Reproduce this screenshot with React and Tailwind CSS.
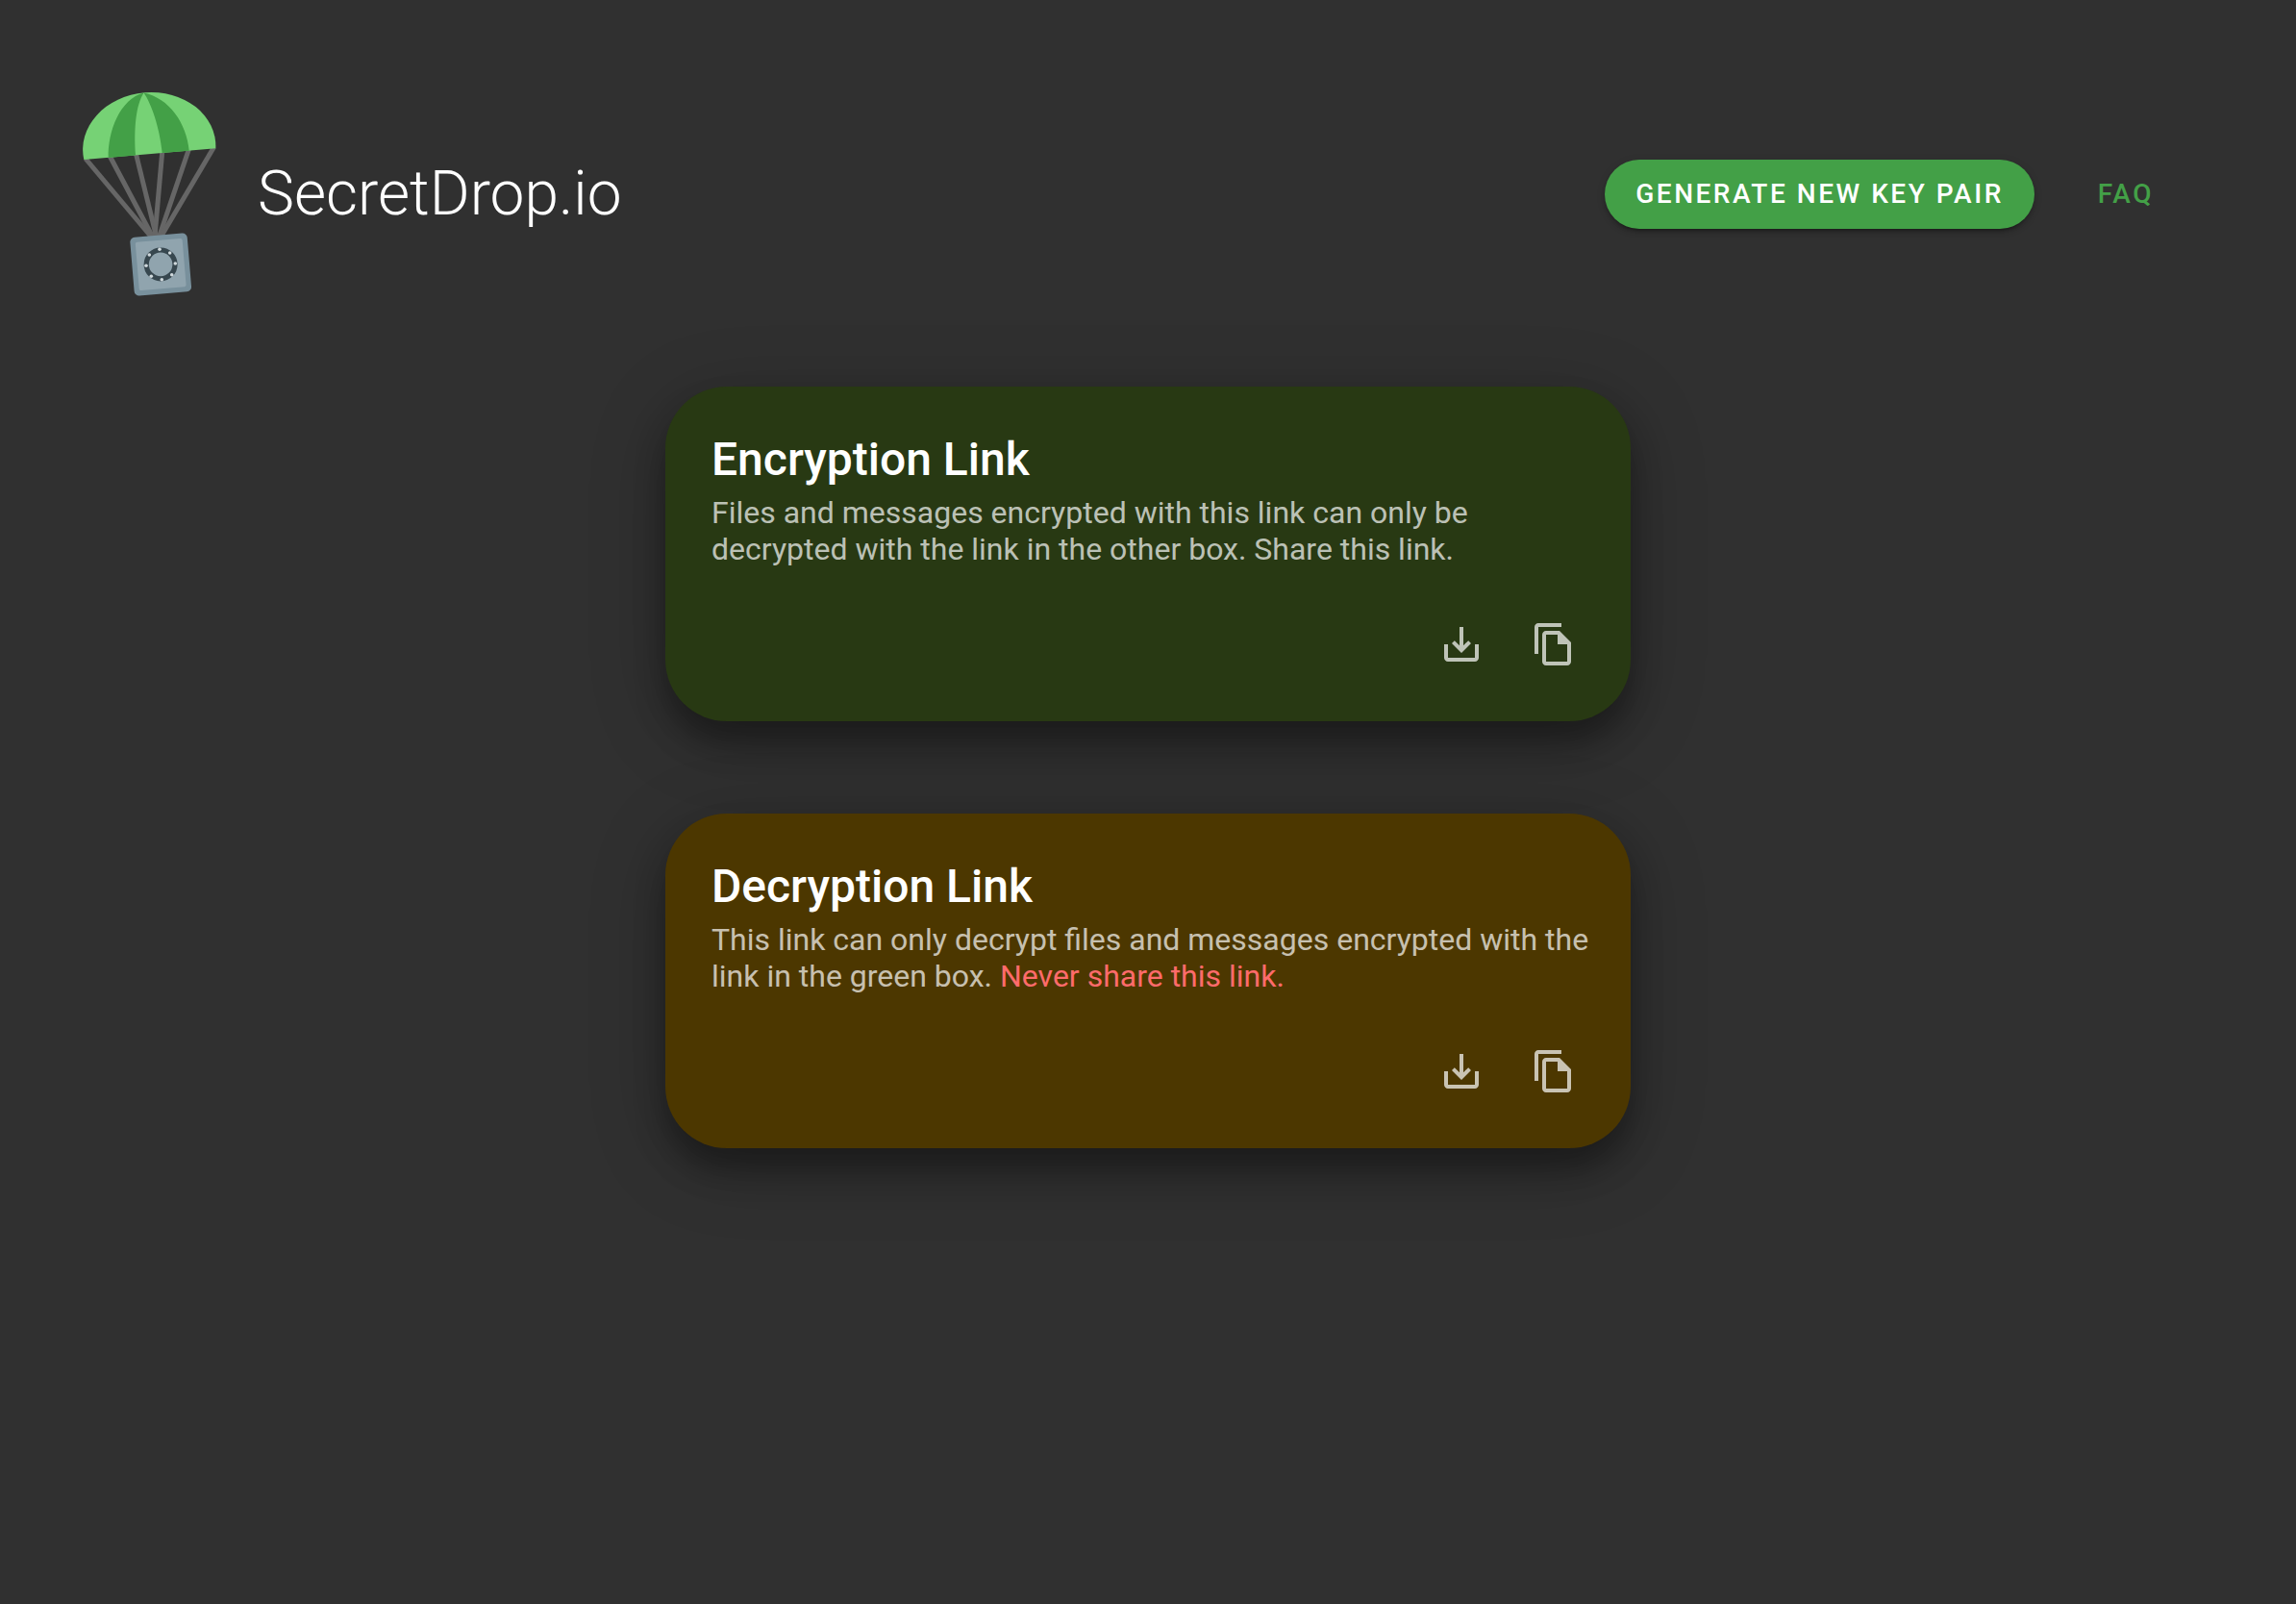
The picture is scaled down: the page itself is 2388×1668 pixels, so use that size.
import React from "react";

const BOLTS = [
  [166, 259.3], [176.7, 263], [182.3, 274], [178.7, 285.7],
  [168.3, 290.7], [157.3, 287.3], [152, 276.3], [155.3, 265],
];

function Logo() {
  return (
    <svg className="h-[216px] w-[144px] shrink-0" viewBox="84 94 144 216" aria-hidden="true">
      <g stroke="#666666" strokeWidth="5" fill="none">
        <path d="M89 165L157 246" />
        <path d="M113.5 161L158.6 246" />
        <path d="M141.2 159L162.6 246" />
        <path d="M168.8 157L161 246" />
        <path d="M196.5 155L165.5 246" />
        <path d="M222.5 153L167.5 246" />
      </g>
      <path d="M87.3 166A69.2 57.5 -4.9 1 1 224.3 154.3Z" fill="#76d275" />
      <path d="M149.5 96.5C125 103 112 136 112.7 163.9L141 161.5C139 133 141.5 109 149.5 96.5Z" fill="#43a047" />
      <path d="M149.5 96.5C157 107 166 132 168.7 159.1L196.7 156.7C194 128 176 102 149.5 96.5Z" fill="#43a047" />
      <g transform="rotate(-4.8 167.2 275)">
        <rect x="137.4" y="244.5" width="59.6" height="61" rx="5" fill="#78909c" />
        <rect x="142.7" y="249.8" width="49" height="50.4" rx="2" fill="#90a4ae" />
      </g>
      <circle cx="167.1" cy="274.9" r="14.9" fill="none" stroke="#37474f" strokeWidth="5.2" />
      {BOLTS.map(([x, y]) => (
        <circle key={`${x}-${y}`} cx={x} cy={y} r="1.8" fill="#cfd8dc" />
      ))}
    </svg>
  );
}

function IconButton({ label, path }) {
  return (
    <button type="button" aria-label={label} className="rounded-full p-6 text-white/70">
      <svg className="size-12" viewBox="0 0 24 24" fill="currentColor" aria-hidden="true">
        <path d={path} />
      </svg>
    </button>
  );
}

const SAVE =
  "M19 12v7H5v-7H3v7c0 1.1.9 2 2 2h14c1.1 0 2-.9 2-2v-7h-2zm-6 .67l2.59-2.58L17 11.5l-5 5-5-5 1.41-1.41L11 12.67V3h2v9.67z";
const COPY =
  "M16 1H4c-1.1 0-2 .9-2 2v14h2V3h12V1zm-1 4H8c-1.1 0-1.99.9-1.99 2L6 21c0 1.1.89 2 1.99 2H19c1.1 0 2-.9 2-2V11l-6-6zm4 16H8V7h6v5h5v9z";

function LinkCard({ title, color, children }) {
  return (
    <section
      className={`${color} rounded-[64px] px-8 pt-12 pb-8 shadow-[0_22px_32px_0_rgba(0,0,0,0.32),0_16px_80px_0_rgba(0,0,0,0.22)]`}
    >
      <div className="pr-2 pl-4">
        <h2 className="text-[48px] leading-[56px] font-medium text-white">{title}</h2>
        <p className="mt-2 text-[32px] leading-[38px] text-white/70">{children}</p>
      </div>
      <div className="mt-8 flex justify-end">
        <IconButton label={`Download ${title}`} path={SAVE} />
        <IconButton label={`Copy ${title}`} path={COPY} />
      </div>
    </section>
  );
}

export default function App() {
  return (
    <div className="min-h-screen bg-[#303030] pb-24 font-['Roboto',sans-serif]">
      <header className="flex items-center justify-between pt-[94px] pr-[116px] pl-[84px]">
        <div className="flex items-center gap-10">
          <Logo />
          <h1 className="text-[64px] leading-[76px] font-light text-white">SecretDrop.io</h1>
        </div>
        <nav className="flex items-center gap-[34px]">
          <button
            type="button"
            className="h-[72px] rounded-full bg-[#43a047] px-8 text-[28px] leading-[48px] font-medium tracking-[0.09em] text-white uppercase shadow-[0_6px_2px_-4px_rgba(0,0,0,0.2),0_4px_4px_0_rgba(0,0,0,0.14),0_2px_10px_0_rgba(0,0,0,0.12)]"
          >
            Generate new key pair
          </button>
          <a href="#faq" className="px-8 text-[28px] leading-[48px] font-medium tracking-[0.09em] text-[#43a047] uppercase">
            FAQ
          </a>
        </nav>
      </header>
      <main className="mx-auto mt-[92px] flex max-w-[1004px] flex-col gap-24">
        <LinkCard title="Encryption Link" color="bg-[#283913]">
          Files and messages encrypted with this link can only be decrypted with the link in the other box. Share this
          link.
        </LinkCard>
        <LinkCard title="Decryption Link" color="bg-[#4c3700]">
          This link can only decrypt files and messages encrypted with the link in the green box.{" "}
          <span className="text-[#ff6b6b]">Never share this link.</span>
        </LinkCard>
      </main>
    </div>
  );
}
